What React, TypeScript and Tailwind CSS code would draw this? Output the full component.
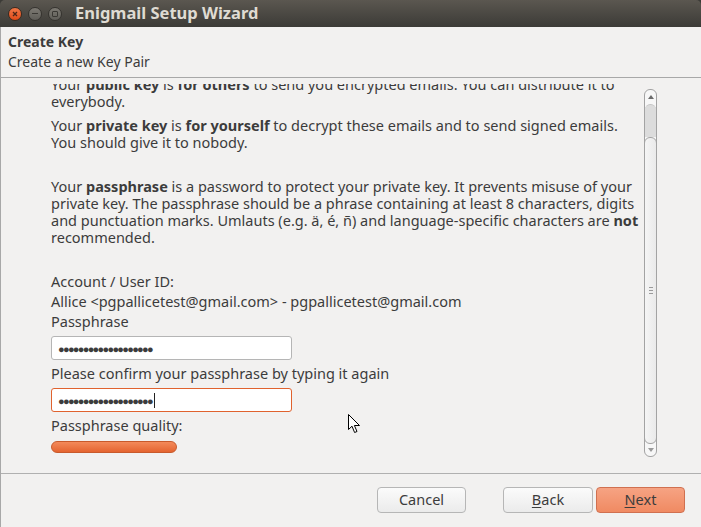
const font = "font-['Noto_Sans','Open_Sans',sans-serif]"

function TitleBar() {
  return (
    <div className="h-[27px] shrink-0 flex items-center bg-gradient-to-b from-[#5b5750] to-[#3c3b37] rounded-t-[5px]">
      <div className="flex items-center gap-[6px] pl-[8px]">
        <div className="w-[14px] h-[14px] rounded-full bg-gradient-to-b from-[#f07746] to-[#df4a16] border border-[#3a2a20] flex items-center justify-center">
          <svg width="6" height="6" viewBox="0 0 6 6">
            <path d="M1 1L5 5M5 1L1 5" stroke="#4a2618" strokeWidth="1.3" />
          </svg>
        </div>
        <div className="w-[14px] h-[14px] rounded-full bg-gradient-to-b from-[#7d7a73] to-[#5f5d58] border border-[#35332f] flex items-center justify-center">
          <div className="w-[6px] h-[1.5px] bg-[#3a3834]" />
        </div>
        <div className="w-[14px] h-[14px] rounded-full bg-gradient-to-b from-[#7d7a73] to-[#5f5d58] border border-[#35332f] flex items-center justify-center">
          <div className="w-[6px] h-[6px] border border-[#3a3834] rounded-[1px]" />
        </div>
      </div>
      <span className="ml-[13px] text-[16.5px] font-bold text-[#dfdbd2] leading-none">Enigmail Setup Wizard</span>
    </div>
  )
}

function Scrollbar() {
  return (
    <div className="w-[13px] h-[368px] mt-[11px] mr-[44px] shrink-0 rounded-[6px] border border-[#a3a3a3] bg-[#f7f7f7] flex flex-col overflow-hidden">
      <div className="h-[14px] flex items-center justify-center">
        <svg width="6" height="4" viewBox="0 0 6 4"><path d="M0 4L3 0L6 4Z" fill="#6b6b6b" /></svg>
      </div>
      <div className="h-[33px] bg-[#dcdcdc] rounded-t-[6px] border-t border-[#c4c4c4]" />
      <div className="h-[307px] bg-gradient-to-r from-[#f5f5f5] to-[#eaeaea] border border-[#a3a3a3] rounded-[6px] -mx-px flex items-center justify-center">
        <div className="flex flex-col gap-[2px]">
          <div className="w-[4px] h-px bg-[#9a9a9a]" />
          <div className="w-[4px] h-px bg-[#9a9a9a]" />
          <div className="w-[4px] h-px bg-[#9a9a9a]" />
        </div>
      </div>
      <div className="flex-1 flex items-center justify-center">
        <svg width="6" height="4" viewBox="0 0 6 4"><path d="M0 0L3 4L6 0Z" fill="#9a9a9a" /></svg>
      </div>
    </div>
  )
}

function Dots() {
  return <span className="tracking-[-1.7px] text-[11px]">{'\u25CF'.repeat(19)}</span>
}

export default function App() {
  return (
    <div className={`w-[701px] h-[527px] bg-[#3c3b37] ${font} text-[#3c3c3c] overflow-hidden relative`}>
      <TitleBar />
      <div className="h-[500px] bg-[#f2f1f0] border-l border-[#a8a8a8] flex flex-col">
        <div className="h-[51px] shrink-0 px-[7px] pt-[5px] border-b border-[#a8a8a8] text-[14px] leading-[20px]">
          <div className="font-bold">Create Key</div>
          <div>Create a new Key Pair</div>
        </div>
        <div className="h-[395px] shrink-0 flex">
          <div className="flex-1 pt-[6px]">
            <div className="h-full overflow-hidden pl-[50px] text-[14.5px] leading-[17px] whitespace-nowrap">
              <div className="-mt-[8px]">
                <p>Your <b>public key</b> is <b>for others</b> to send you encrypted emails. You can distribute it to<br />everybody.</p>
                <p className="mt-[7px]">Your <b>private key</b> is <b>for yourself</b> to decrypt these emails and to send signed emails.<br />You should give it to nobody.</p>
                <p className="mt-[27px]">Your <b>passphrase</b> is a password to protect your private key. It prevents misuse of your<br />private key. The passphrase should be a phrase containing at least 8 characters, digits<br />and punctuation marks. Umlauts (e.g. ä, é, ñ) and language-specific characters are <b>not</b><br />recommended.</p>
                <div className="mt-[25px] leading-[20px]">
                  <div>Account / User ID:</div>
                  <div>Allice &lt;pgpallicetest@gmail.com&gt; - pgpallicetest@gmail.com</div>
                  <div>Passphrase</div>
                </div>
                <div className="mt-[5px] w-[241px] h-[24px] bg-white border border-[#b5b5b5] rounded-[3px] flex items-center pl-[6px] text-[#3c3c3c]">
                  <Dots />
                </div>
                <div className="mt-[3px] leading-[20px]">Please confirm your passphrase by typing it again</div>
                <div className="mt-[5px] w-[241px] h-[24px] bg-white border border-[#e0622e] rounded-[3px] flex items-center pl-[6px]">
                  <Dots />
                  <div className="w-px h-[15px] bg-[#222] ml-[2px]" />
                </div>
                <div className="mt-[3px] leading-[20px]">Passphrase quality:</div>
                <div className="mt-[6px] w-[126px] h-[12px] rounded-[6px] bg-gradient-to-b from-[#f38a5a] to-[#e4642f] border border-[#c85a2c]" />
              </div>
            </div>
          </div>
          <Scrollbar />
        </div>
        <div className="flex-1 border-t border-[#b0b0b0] flex items-start pt-[13px]">
          <div className="ml-[376px] w-[89px] h-[26px] rounded-[4px] border border-[#b6b6b6] bg-gradient-to-b from-[#fbfbfb] to-[#ebebeb] flex items-center justify-center text-[14.5px]">Cancel</div>
          <div className="ml-[37px] w-[90px] h-[26px] rounded-[4px] border border-[#b6b6b6] bg-gradient-to-b from-[#fbfbfb] to-[#ebebeb] flex items-center justify-center text-[14.5px]"><span className="underline underline-offset-2">B</span>ack</div>
          <div className="ml-[3px] w-[89px] h-[26px] rounded-[4px] border border-[#d07050] bg-gradient-to-b from-[#f6a383] to-[#f08a62] flex items-center justify-center text-[14.5px]"><span className="underline underline-offset-2">N</span>ext</div>
        </div>
      </div>
      <svg className="absolute left-[348px] top-[414px]" width="13" height="20" viewBox="0 0 13 20">
        <path d="M0.5 0.5L0.5 15.5L4 12.2L6.6 18.5L9 17.5L6.4 11.5L11.5 11.5Z" fill="#fff" stroke="#000" strokeWidth="1" strokeLinejoin="round" />
      </svg>
    </div>
  )
}
